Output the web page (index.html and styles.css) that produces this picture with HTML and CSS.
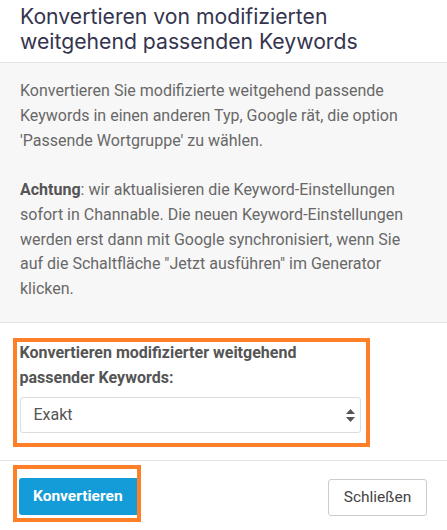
FILE: index.html
```html
<!DOCTYPE html>
<html lang="de">
<head>
    <meta charset="UTF-8">
    <meta name="viewport" content="width=device-width, initial-scale=1.0">
    <title>Keywords konvertieren</title>
    <link rel="stylesheet" href="styles.css">
</head>
<body>
    <div class="modal">
        <div class="modal-header">
            <h2>Konvertieren von modifizierten weitgehend passenden Keywords</h2>
        </div>

        <div class="modal-info">
            <p>Konvertieren Sie modifizierte weitgehend passende Keywords in einen anderen Typ, Google rät, die option 'Passende Wortgruppe' zu wählen.</p>
            <p><strong>Achtung</strong>: wir aktualisieren die Keyword-Einstellungen sofort in Channable. Die neuen Keyword-Einstellungen werden erst dann mit Google synchronisiert, wenn Sie auf die Schaltfläche "Jetzt ausführen" im Generator klicken.</p>
        </div>

        <div class="modal-body">
            <div class="mark form-group">
                <label for="matchType">Konvertieren modifizierter weitgehend passender Keywords:</label>
                <div class="select-wrap">
                    <select id="matchType" name="matchType">
                        <option>Exakt</option>
                        <option>Passende Wortgruppe</option>
                    </select>
                    <svg class="select-arrows" width="9" height="13" viewBox="0 0 9 13">
                        <path d="M4.5 0 L9 5 H0 Z M0 8 H9 L4.5 13 Z" fill="#555"/>
                    </svg>
                </div>
            </div>
        </div>

        <div class="modal-footer">
            <div class="mark btn-mark">
                <button type="button" class="btn btn-primary">Konvertieren</button>
            </div>
            <button type="button" class="btn btn-default">Schließen</button>
        </div>
    </div>
</body>
</html>
```

FILE: styles.css
```css
body {
    margin: 0;
    padding: 0;
    background-color: #ffffff;
    font-family: Roboto, "Liberation Sans", Arial, sans-serif;
}
.modal {
    width: 447px;
    height: 530px;
    overflow: hidden;
}
.modal-header {
    padding: 4px 20px 8px 20px;
    border-bottom: 1px solid #e3e3e3;
}
.modal-header h2 {
    margin: 0;
    font-family: Inter, "Noto Sans", sans-serif;
    font-weight: 400;
    font-size: 21.2px;
    line-height: 25px;
    color: #34344e;
}
.modal-info {
    background-color: #f7f7f7;
    padding: 16px 20px 17px 20px;
    border-bottom: 1px solid #e3e3e3;
    color: #686868;
    font-size: 16px;
    line-height: 24.75px;
}
.modal-info p {
    margin: 0 0 24.75px 0;
}
.modal-info p:last-child {
    margin-bottom: 3px;
}
.modal-info strong {
    color: #555555;
}
.modal-body {
    padding: 15px 13px 13px 13px;
    border-bottom: 1px solid #e3e3e3;
}
.mark {
    border: 4px solid #fd7f27;
}
.form-group {
    width: 341px;
    padding: 0 5px 10px 2.5px;
}
.form-group label {
    display: block;
    margin-top: -2px;
    font-size: 16px;
    font-weight: 700;
    line-height: 25px;
    color: #555555;
}
.select-wrap {
    position: relative;
    margin-top: 7px;
}
.select-wrap select {
    -webkit-appearance: none;
    appearance: none;
    width: 100%;
    height: 36px;
    padding: 0 13px;
    border: 1px solid #dcdcdc;
    border-radius: 3px;
    background-color: #ffffff;
    font-family: Roboto, "Liberation Sans", Arial, sans-serif;
    font-size: 16px;
    color: #555555;
}
.select-arrows {
    position: absolute;
    right: 6px;
    top: 12px;
}
.modal-footer {
    display: flex;
    justify-content: space-between;
    align-items: flex-start;
    padding: 4px 20px 0 13px;
}
.btn-mark {
    width: 118px;
    padding: 9px 0 3px 2px;
    overflow: hidden;
}
.btn {
    height: 37px;
    border-radius: 3px;
    font-family: Roboto, "Liberation Sans", Arial, sans-serif;
    font-size: 15.5px;
    cursor: pointer;
}
.btn-primary {
    display: block;
    width: 120px;
    padding: 0 0 0 14px;
    text-align: left;
    border: none;
    background-color: #149cd8;
    color: #ffffff;
    font-weight: 700;
}
.btn-default {
    margin-top: 14px;
    width: 99px;
    padding: 0;
    border: 1px solid #cccccc;
    background-color: #ffffff;
    color: #444444;
}
```
